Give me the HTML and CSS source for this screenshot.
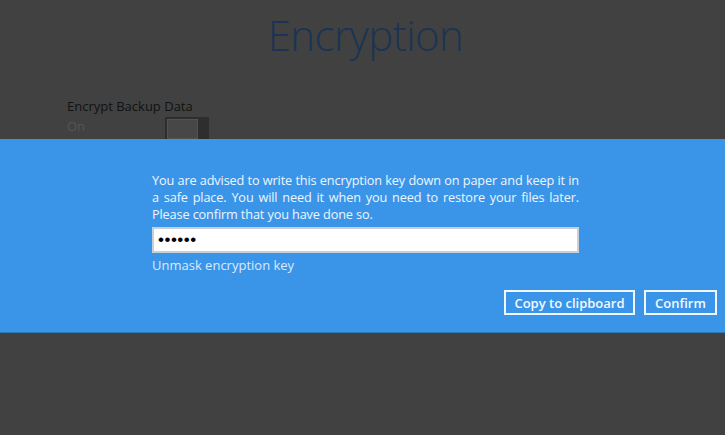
FILE: index.html
```html
<!DOCTYPE html>
<html>
<head>
<meta charset="utf-8">
<link rel="stylesheet" href="styles.css">
</head>
<body>
<div class="page">
  <h1 class="title">Encryption</h1>
  <div class="setting">
    <div class="setting-label">Encrypt Backup Data</div>
    <div class="setting-row">
      <span class="state">On</span>
      <span class="toggle"><span class="toggle-track"></span><span class="toggle-knob"></span></span>
    </div>
  </div>
</div>
<div class="dialog">
  <div class="dialog-body">
    <p class="message">You are advised to write this encryption key down on paper and keep it in a safe place. You will need it when you need to restore your files later. Please confirm that you have done so.</p>
    <input class="key" type="password" value="abcdef" readonly>
    <a class="unmask">Unmask encryption key</a>
  </div>
  <div class="actions">
    <button class="btn btn-copy">Copy to clipboard</button>
    <button class="btn btn-confirm">Confirm</button>
  </div>
</div>
</body>
</html>
```
FILE: styles.css
```css
html, body {
  margin: 0;
  padding: 0;
}
body {
  width: 725px;
  height: 435px;
  background: #414141;
  font-family: "Open Sans", "Noto Sans", sans-serif;
  position: relative;
  overflow: hidden;
}
.page {
  display: flex;
  flex-direction: column;
}
.title {
  margin: 9px 0 0 0;
  padding-left: 6px;
  text-align: center;
  font-weight: 300;
  font-size: 42px;
  line-height: 52px;
  color: #1b3453;
  letter-spacing: -0.6px;
}
.setting {
  margin: 36px 0 0 67px;
  display: flex;
  flex-direction: column;
}
.setting-label {
  font-size: 13px;
  line-height: 18px;
  color: #121212;
}
.setting-row {
  display: flex;
  align-items: flex-start;
  margin-top: 2px;
}
.state {
  font-size: 13px;
  line-height: 18px;
  color: #555;
  width: 98px;
}
.toggle {
  display: flex;
  width: 40px;
  height: 20px;
  border: 2px solid #2e2e2e;
  background: #2e2e2e;
}
.toggle-track {
  flex: 1;
  background: #474747;
  border: 1px solid #525252;
}
.toggle-knob {
  width: 9px;
  background: #2e2e2e;
}
.dialog {
  position: absolute;
  left: 0;
  top: 139px;
  width: 725px;
  height: 193px;
  background: #3a95e9;
  border-bottom: 1px solid #2f78bb;
  display: flex;
  flex-direction: column;
}
.dialog-body {
  margin: 33px 0 0 152px;
  width: 427px;
  display: flex;
  flex-direction: column;
}
.message {
  margin: 0;
  font-size: 12.7px;
  line-height: 17px;
  letter-spacing: -0.12px;
  color: #eef5fd;
  text-align: justify;
}
.key {
  margin-top: 4px;
  box-sizing: border-box;
  width: 427px;
  height: 26px;
  border: 2px solid #c9cfd6;
  background: #fff;
  padding: 0 4px;
  font-size: 17px;
  letter-spacing: 0.5px;
  color: #000;
  outline: none;
}
.unmask {
  margin-top: 3px;
  font-size: 13px;
  line-height: 18px;
  color: #dbeafb;
}
.actions {
  margin-top: 16px;
  display: flex;
  justify-content: flex-end;
  gap: 9px;
  padding-right: 8px;
}
.btn {
  box-sizing: border-box;
  height: 25px;
  background: transparent;
  border: 2px solid #f1f7fe;
  color: #f4f9ff;
  font-family: "Open Sans", "Noto Sans", sans-serif;
  font-size: 13px;
  font-weight: 600;
  padding: 0;
}
.btn-copy {
  width: 131px;
}
.btn-confirm {
  width: 73px;
}
```
